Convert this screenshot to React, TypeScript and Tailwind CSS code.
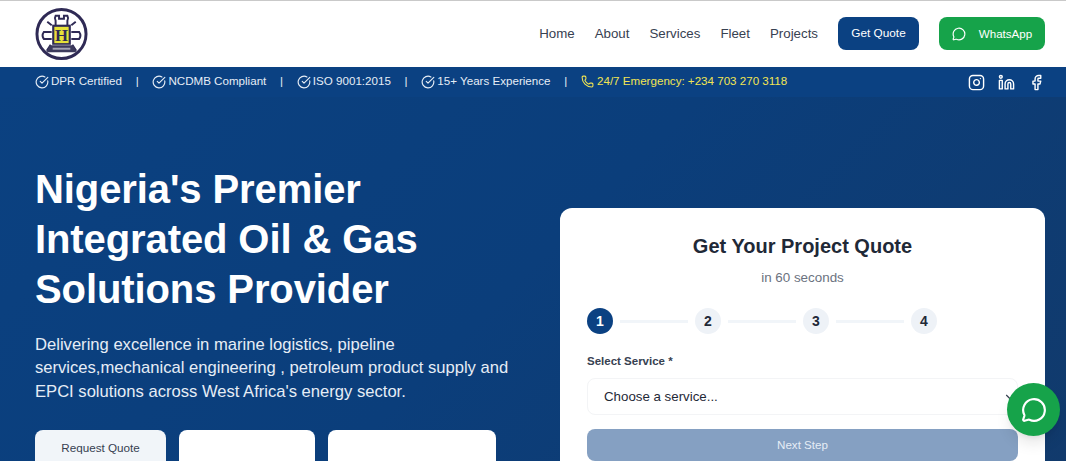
import { CircleCheckBig, ChevronDown, Phone, Instagram, Linkedin, Facebook, MessageCircle } from 'lucide-react';

const badges = ["DPR Certified", "NCDMB Compliant", "ISO 9001:2015", "15+ Years Experience"];
const links = ["Home", "About", "Services", "Fleet", "Projects"];

function Logo() {
    return (
        <svg width="53" height="54" viewBox="0 0 54 54" fill="none">
            <circle cx="27" cy="27" r="25" fill="white" stroke="#2f2a55" strokeWidth="3" />
            {/* crown and side arms */}
            <path d="M21 18V13.5Q19.5 11 21 8.5H24.5V11.5H29.5V8.5H33Q34.5 11 33 13.5V18" stroke="#2f2a55" strokeWidth="2" />
            <path d="M17 25H9Q6.5 28.5 9 32H17M37 25H45Q47.5 28.5 45 32H37" stroke="#2f2a55" strokeWidth="2" />
            <path d="M17 18L12.5 14.5M37 18L41.5 14.5M16 38L12 44M38 38L42 44" stroke="#2f2a55" strokeWidth="2" />
            {/* centre block */}
            <rect x="17.5" y="17.5" width="19" height="20.5" fill="#2f2a55" />
            <rect x="19.7" y="19.7" width="14.6" height="16.6" fill="#e6e238" />
            <text x="27" y="34" textAnchor="middle" fontSize="17" fontWeight="700" fontFamily="'Liberation Serif', serif" fill="#2f2a55">H</text>
            <path d="M15 38.5H39L42 45.5H12Z" fill="#3c3a5c" />
            <rect x="18" y="41" width="18" height="2" fill="#a5a4b5" />
        </svg>
    );
}

export default function App() {
    return (
        <div className="relative h-[461px] overflow-hidden bg-white font-['Liberation_Sans',Arial,sans-serif]">
            {/* Navbar */}
            <nav className="flex h-[67px] items-center justify-between border-t border-t-[#c9c9c9] bg-white pb-[1px] pl-[35px] pr-[21px]">
                <Logo />
                <div className="flex items-center">
                    {links.map((l) => (
                        <a key={l} className="mr-5 text-[13.3px] text-[#374151]">{l}</a>
                    ))}
                    <button className="h-[33px] w-[81px] rounded-lg bg-[#0b4182] text-[11.8px] text-white">Get Quote</button>
                    <button className="ml-5 flex h-[33px] w-[106px] items-center justify-center gap-[13px] rounded-lg bg-[#16a34a] text-[11.6px] text-white">
                        <MessageCircle size={14} />
                        WhatsApp
                    </button>
                </div>
            </nav>

            {/* Hero */}
            <section className="h-[394px] bg-[linear-gradient(135deg,#0b4181_0%,#0b3e7b_50%,#113a6c_100%)]">
                <div className="flex h-[30px] items-center justify-between bg-[#0b4182] pl-[35px] pr-[21px]">
                    <div className="mb-[2px] flex items-center text-[11.6px] text-[#e6edf6]">
                        {badges.map((b) => (
                            <div key={b} className="flex items-center">
                                <CircleCheckBig size={14} className="mr-[2px] mt-[2px]" />
                                <span>{b}</span>
                                <span className="mx-[13.75px]">|</span>
                            </div>
                        ))}
                        <Phone size={13} className="mr-[3px] mt-[2px] text-[#f2e552]" />
                        <span className="text-[#f2e552]">24/7 Emergency: +234 703 270 3118</span>
                    </div>
                    <div className="flex items-center gap-[13px] text-white">
                        <Instagram size={17} />
                        <Linkedin size={17} />
                        <Facebook size={17} />
                    </div>
                </div>

                <div className="flex justify-between pl-[35px] pr-[21px]">
                    <div className="w-[490px] pt-[67px]">
                        <h1 className="text-[40px] font-bold leading-[50px] tracking-[-0.1px] text-white">
                            Nigeria's Premier<br />Integrated Oil &amp; Gas<br />Solutions Provider
                        </h1>
                        <p className="mt-[19px] w-[480px] text-[16.6px] leading-[23.4px] text-[#e6edf6]">
                            Delivering excellence in marine logistics, pipeline services,mechanical engineering , petroleum product supply and EPCI solutions across West Africa's energy sector.
                        </p>
                        <div className="mt-[27px] flex gap-[13px]">
                            <button className="h-[50px] w-[131px] rounded-lg bg-[#f1f5f9] pb-[15px] text-[11.7px] text-[#374151]">Request Quote</button>
                            <div className="h-[50px] w-[136px] rounded-lg bg-white" />
                            <div className="h-[50px] w-[168px] rounded-lg bg-white" />
                        </div>
                    </div>

                    <div className="mt-[111px] h-[300px] w-[485px] rounded-xl bg-white px-[27px] pt-[24px]">
                        <h2 className="text-center text-xl font-bold text-[#1f2937]">Get Your Project Quote</h2>
                        <p className="mt-[8px] text-center text-[13.4px] text-[#6b7280]">in 60 seconds</p>
                        <div className="mt-[20px] flex items-center">
                            <div className="flex size-[26px] items-center justify-center rounded-full bg-[#0b4182] text-sm font-bold text-white">1</div>
                            {["2", "3", "4"].map((n) => (
                                <div key={n} className="flex items-center">
                                    <div className="mx-[7px] h-[3px] w-[68px] bg-[#f1f5f9]" />
                                    <div className="flex size-[26px] items-center justify-center rounded-full bg-[#eef2f7] text-sm font-bold text-[#1f2937]">{n}</div>
                                </div>
                            ))}
                        </div>
                        <label className="mt-[19px] block text-[11.5px] font-bold text-[#374151]">Select Service *</label>
                        <div className="mt-[8px] flex h-[37px] items-center justify-between rounded-lg border border-[#f3f4f6] pl-4 text-[13.3px] text-[#1f2937]">
                            Choose a service...
                            <ChevronDown size={14} className="text-[#374151]" />
                        </div>
                        <button className="mt-[14px] h-[32px] w-full rounded-lg bg-[#85a0c2] pb-[2px] text-[11.6px] text-[#e6edf6]">Next Step</button>
                    </div>
                </div>
            </section>

            {/* Floating chat */}
            <button className="absolute left-[1007px] top-[383px] flex size-[53px] items-center justify-center rounded-full bg-[#16a34a] text-white shadow-lg">
                <MessageCircle size={26} />
            </button>
        </div>
    );
}
